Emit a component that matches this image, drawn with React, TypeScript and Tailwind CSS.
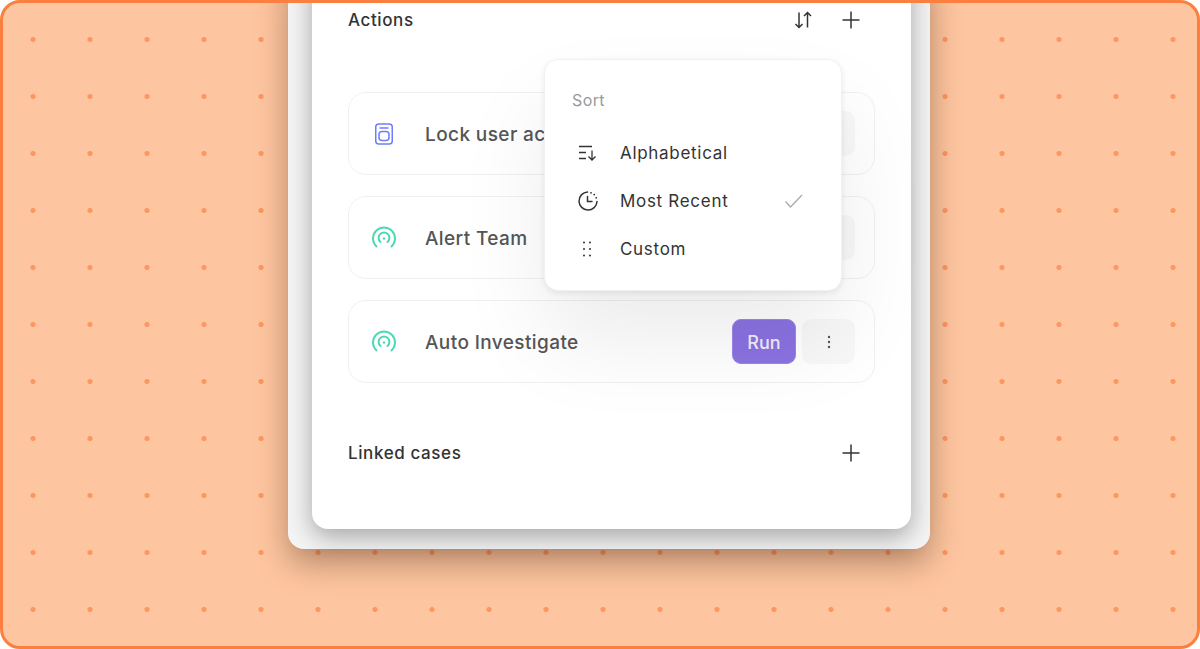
import { FC } from "react";

const PlusIcon: FC = () => (
  <svg width="22" height="22" viewBox="0 0 22 22" fill="none" stroke="#333" strokeWidth="1.5">
    <path d="M11 2.5v17M2.5 11h17" />
  </svg>
);

const SwapIcon: FC = () => (
  <svg width="22" height="22" viewBox="0 0 22 22" fill="none" stroke="#333" strokeWidth="1.5">
    <path d="M7 3.5v15M3.5 15l3.5 3.5 3.5-3.5M15.5 18.500v-15M12 7l3.500-3.500L19 7" />
  </svg>
);

const DeviceIcon: FC = () => (
  <svg width="20" height="24" viewBox="0 0 20 24" fill="none" stroke="#6f7dfb" strokeWidth="1.5">
    <rect x="1.750" y="2" width="16.500" height="20" rx="3" />
    <path d="M5.500 6h9" />
    <rect x="5" y="9.500" width="10" height="9" rx="3" />
  </svg>
);

const SignalIcon: FC = () => (
  <svg width="26" height="24" viewBox="0 0 26 24" fill="none" stroke="#4fd9b5" strokeWidth="2" strokeLinecap="round">
    <path d="M5.500 20.500a11 11 0 1 1 15 0" />
    <path d="M9.500 16a5.400 5.400 0 1 1 7 0" />
    <circle cx="13" cy="12.500" r="1.200" fill="#4fd9b5" stroke="none" />
  </svg>
);

const AlphaIcon: FC = () => (
  <svg width="22" height="22" viewBox="0 0 22 22" fill="none" stroke="#333" strokeWidth="1.300">
    <path d="M2 4.500h13M2 10.500h7M2 16.500h7M15 8.500v9.500M11.500 14.500l3.500 3.500 3.500-3.500" />
  </svg>
);

const RecentIcon: FC = () => (
  <svg width="24" height="24" viewBox="0 0 24 24" fill="none" stroke="#333" strokeWidth="1.500" strokeLinecap="round">
    <path d="M11.500 3a9 9 0 1 0 9.500 9.500" />
    <path d="M11.500 7.500v5h4.500" />
    <path d="M15 3.800h.01M18.200 5.600h.01M20.200 8.800h.01" strokeWidth="1.800" />
  </svg>
);

const GripIcon: FC = () => (
  <svg width="22" height="22" viewBox="0 0 22 22" fill="#444">
    <circle cx="7" cy="4.500" r="1.100" />
    <circle cx="13" cy="4.500" r="1.100" />
    <circle cx="7" cy="11" r="1.100" />
    <circle cx="13" cy="11" r="1.100" />
    <circle cx="7" cy="17.500" r="1.100" />
    <circle cx="13" cy="17.500" r="1.100" />
  </svg>
);

const CheckIcon: FC = () => (
  <svg width="20" height="16" viewBox="0 0 20 16" fill="none" stroke="#aaa" strokeWidth="1.300">
    <path d="M1.500 8.500l5 5.500L18 2" />
  </svg>
);

const KebabIcon: FC = () => (
  <svg width="4" height="14" viewBox="0 0 4 14" fill="#555">
    <circle cx="2" cy="2" r="1.200" />
    <circle cx="2" cy="7" r="1.200" />
    <circle cx="2" cy="12" r="1.200" />
  </svg>
);

type ActionRowProps = {
  icon: React.ReactNode;
  label: string;
};

const ActionRow: FC<ActionRowProps> = ({ icon, label }) => (
  <div className="flex h-[83px] items-center rounded-[18px] border border-[#f0f0f0] pl-[20px] pr-[19px]">
    <div className="flex w-[30px] justify-center">{icon}</div>
    <span className="ml-[26px] flex-1 pt-[3px] text-[19px] font-medium tracking-[0.4px] text-[#555]">{label}</span>
    <button className="h-[45px] w-[64px] rounded-[9px] border border-[#9a86ea] bg-[#8b72e2] pt-[1px] text-[18px] font-medium text-[#f1eefb]">
      Run
    </button>
    <button className="ml-[6px] flex h-[45px] w-[53px] items-center justify-center rounded-[9px] bg-[#f8f8f8]">
      <KebabIcon />
    </button>
  </div>
);

const MenuItem: FC<{ icon: React.ReactNode; label: string; checked?: boolean }> = ({ icon, label, checked }) => (
  <div className="flex h-[48px] items-center">
    <div className="flex w-[32px] justify-center">{icon}</div>
    <span className="ml-[16px] flex-1 pt-[1px] text-[17px] tracking-[0.7px] text-[#333]">{label}</span>
    {checked && <CheckIcon />}
  </div>
);

const App: FC = () => {
  return (
    <div className="h-[649px] w-[1200px] bg-white font-['Inter',sans-serif]">
      <div className="flex h-full flex-col justify-end overflow-hidden rounded-[20px] border-[3px] border-[#fb7f3e] bg-[#fec6a0] bg-[radial-gradient(circle,#fd9660_2.200px,transparent_2.800px)] bg-[length:57px_57px] bg-[position:1.500px_8px] pb-[97px] pl-[285px]">
        <div className="relative w-[642px] rounded-[16px] bg-[#f4f4f4] pb-[20px] pl-[24px] pr-[19px] shadow-[0_14px_32px_rgba(70,40,20,0.4)]">
          <div className="relative w-[599px] rounded-[16px] bg-white px-[36px] pb-[64px] pt-[40px] shadow-[0_8px_24px_rgba(0,0,0,0.32)]">
            <div className="flex h-[24px] items-center justify-between pr-[13px]">
              <span className="pt-[1px] text-[17px] font-medium tracking-[0.6px] text-[#333]">Actions</span>
              <div className="flex items-center gap-[26px]">
                <SwapIcon />
                <PlusIcon />
              </div>
            </div>

            <div className="mt-[60px] flex flex-col gap-[21px]">
              <ActionRow icon={<DeviceIcon />} label="Lock user account" />
              <ActionRow icon={<SignalIcon />} label="Alert Team" />
              <ActionRow icon={<SignalIcon />} label="Auto Investigate" />
            </div>

            <div className="mt-[58px] flex h-[24px] items-center justify-between pr-[13px]">
              <span className="pt-[1px] text-[17px] font-medium tracking-[0.6px] text-[#333]">Linked cases</span>
              <PlusIcon />
            </div>

            {/* Sort dropdown */}
            <div className="absolute bottom-[238px] left-[232px] h-[232px] w-[298px] rounded-[14px] border border-[#f1f1f1] bg-white pl-[27px] pr-[37px] pt-[30px] shadow-[0_2px_6px_rgba(0,0,0,0.08),0_50px_90px_rgba(0,0,0,0.08)]">
              <div className="text-[16px] leading-[20px] tracking-[0.4px] text-[#999]">Sort</div>
              <div className="mt-[19px]">
                <MenuItem icon={<AlphaIcon />} label="Alphabetical" />
                <MenuItem icon={<RecentIcon />} label="Most Recent" checked />
                <MenuItem icon={<GripIcon />} label="Custom" />
              </div>
            </div>
          </div>
        </div>
      </div>
    </div>
  );
};

export default App;
